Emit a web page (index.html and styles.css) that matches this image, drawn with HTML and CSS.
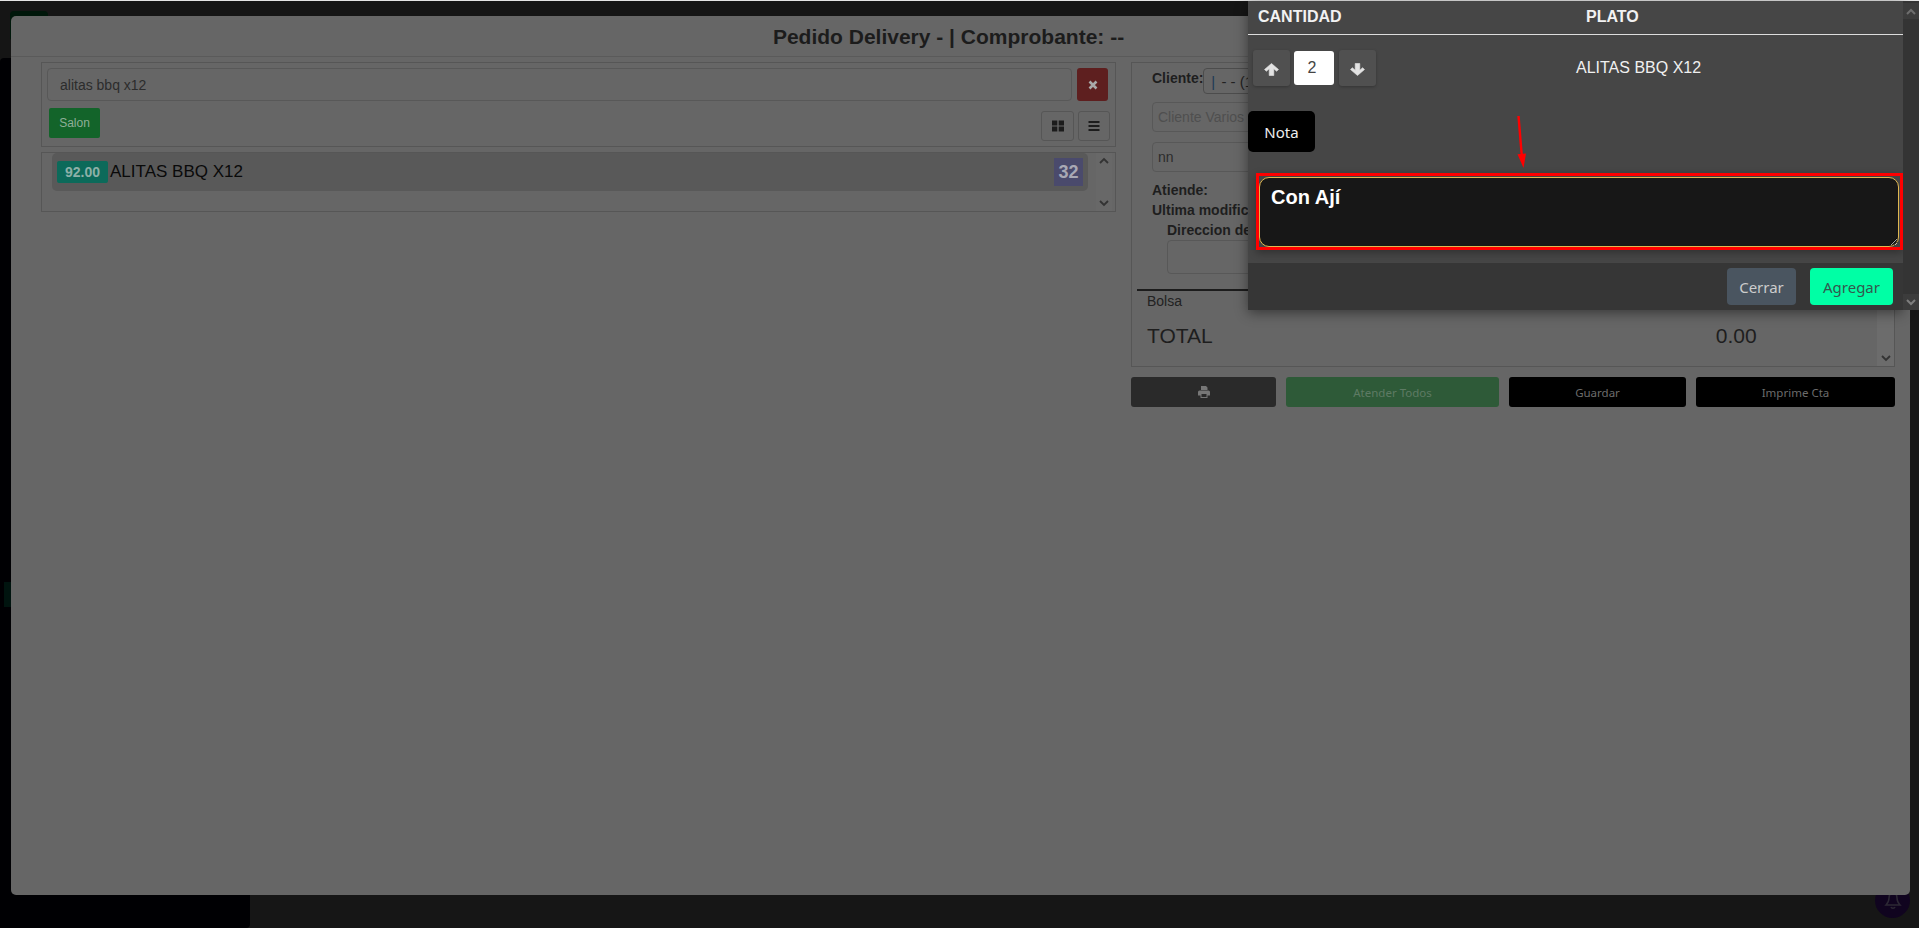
FILE: index.html
```html
<!DOCTYPE html>
<html lang="es">
<head>
<meta charset="utf-8">
<title>Pedido Delivery</title>
<link rel="stylesheet" href="styles.css">
</head>
<body>
<div class="page">
  <div class="topbar"><span class="logo"></span></div>
  <div class="below">
    <aside class="sidebar"><span class="side-active"></span></aside>
  </div>
  <span class="bell">
    <svg width="18" height="20" viewBox="0 0 18 20"><path d="M9 2c-3 0-4 2.500-4 5 0 4-1.500 5.500-3 7h14c-1.500-1.500-3-3-3-7 0-2.500-1-5-4-5zM7 16c.5 1.500 3.500 1.500 4 0" fill="none" stroke="#2c2834" stroke-width="1.500"/></svg>
  </span>
</div>

<section class="modal">
  <header class="modal-head"><h1>Pedido Delivery - | Comprobante: --</h1></header>
  <div class="modal-body">
    <div class="col-left">
      <div class="box search-box">
        <div class="search-row">
          <div class="field search-field">alitas bbq x12</div>
          <button class="btn-x">
            <svg width="10" height="10" viewBox="0 0 10 10"><path d="M1.500 1.500l7 7M8.500 1.500l-7 7" stroke="#a8a8a8" stroke-width="2.600" fill="none"/></svg>
          </button>
        </div>
        <div class="tool-row">
          <button class="btn-salon">Salon</button>
          <div class="view-btns">
            <button class="btn-view">
              <svg width="12" height="12" viewBox="0 0 12 12"><path d="M0 .5h5.300v5H0zM6.700 .5H12v5H6.700zM0 6.500h5.300v5H0zM6.700 6.500H12v5H6.700z" fill="#1c1c1c"/></svg>
            </button>
            <button class="btn-view btn-view-b">
              <svg width="12" height="12" viewBox="0 0 12 12"><path d="M.5 1h11v2H.5zM.5 5h11v2H.5zM.5 9h11v2H.5z" fill="#1c1c1c"/></svg>
            </button>
          </div>
        </div>
      </div>
      <div class="box list-box">
        <div class="list">
          <div class="item">
            <span class="price">92.00</span>
            <span class="item-name">ALITAS BBQ X12</span>
            <span class="stock">32</span>
          </div>
        </div>
        <div class="scroll scroll-left">
          <svg class="chev" width="10" height="7" viewBox="0 0 10 7"><path d="M1 6l4-4 4 4" stroke="#333" stroke-width="1.800" fill="none"/></svg>
          <svg class="chev" width="10" height="7" viewBox="0 0 10 7"><path d="M1 1l4 4 4-4" stroke="#333" stroke-width="1.800" fill="none"/></svg>
        </div>
      </div>
    </div>

    <div class="col-right">
      <div class="box client-box">
        <div class="client-main">
          <div class="client-row">
            <label class="lbl">Cliente:</label>
            <div class="field select-field"><span class="bar">|</span> - - (1</div>
          </div>
          <div class="field plain-field muted">Cliente Varios</div>
          <div class="field plain-field">nn</div>
          <p class="lbl line">Atiende:</p>
          <p class="lbl line">Ultima modificacion:</p>
          <p class="lbl line indent">Direccion de entrega:</p>
          <div class="field addr-field"></div>
          <div class="bag">
            <p class="bag-label">Bolsa</p>
            <div class="total"><span>TOTAL</span><span class="total-num">0.00</span></div>
          </div>
        </div>
        <div class="scroll scroll-right">
          <svg class="chev" width="10" height="7" viewBox="0 0 10 7"><path d="M1 6l4-4 4 4" stroke="#333" stroke-width="1.800" fill="none"/></svg>
          <svg class="chev" width="10" height="7" viewBox="0 0 10 7"><path d="M1 1l4 4 4-4" stroke="#333" stroke-width="1.800" fill="none"/></svg>
        </div>
      </div>
      <div class="actions">
        <button class="act act-print">
          <svg width="12" height="12" viewBox="0 0 12 12"><path d="M3 0h5l1.500 1.500V4H3zM1.500 4.500h9A1.500 1.500 0 0 1 12 6v3.500H9.500V12h-7V9.500H0V6a1.500 1.500 0 0 1 1.500-1.500zM3.500 8v3h5V8z" fill="#777" fill-rule="evenodd"/></svg>
        </button>
        <button class="act act-serve">Atender Todos</button>
        <button class="act act-save">Guardar</button>
        <button class="act act-print-acc">Imprime Cta</button>
      </div>
    </div>
  </div>
</section>

<section class="panel">
  <div class="panel-head"><span class="h-qty">CANTIDAD</span><span class="h-dish">PLATO</span></div>
  <div class="qty-row">
    <div class="qty">
      <button class="qty-btn">
        <svg width="15" height="13" viewBox="0 0 15 13"><path d="M7.500.5L14.500 6.500 12.600 8.300 9.800 5.800V12.500H5.200V5.800L2.400 8.300.5 6.500z" fill="#e2e2e2" stroke="#e2e2e2" stroke-width=".6" stroke-linejoin="round"/></svg>
      </button>
      <div class="qty-val">2</div>
      <button class="qty-btn">
        <svg width="15" height="13" viewBox="0 0 15 13"><path d="M7.500 12.500L.5 6.500 2.400 4.700 5.200 7.200V.5H9.800V7.200L12.600 4.700 14.500 6.500z" fill="#e2e2e2" stroke="#e2e2e2" stroke-width=".6" stroke-linejoin="round"/></svg>
      </button>
    </div>
    <div class="dish">ALITAS BBQ X12</div>
  </div>
  <div class="note-tag">Nota</div>
  <div class="note-frame">
    <textarea class="note" spellcheck="false">Con Ají</textarea>
  </div>
  <footer class="panel-foot">
    <button class="btn-close">Cerrar</button>
    <button class="btn-add">Agregar</button>
  </footer>
  <svg class="arrow" width="14" height="54" viewBox="0 0 14 54"><path d="M2.500 0L5.800 40" stroke="#f00" stroke-width="2.400" fill="none"/><path d="M1.500 38.300l8.500-.8L7.500 52z" fill="#f00"/></svg>
</section>
<div class="panel-scroll">
  <span class="sb-btn"><svg width="10" height="7" viewBox="0 0 10 7"><path d="M1 6l4-4 4 4" stroke="#6e6e6e" stroke-width="2" fill="none"/></svg></span>
  <span class="sb-btn"><svg width="10" height="7" viewBox="0 0 10 7"><path d="M1 1l4 4 4-4" stroke="#7e7e7e" stroke-width="2" fill="none"/></svg></span>
</div>
</body>
</html>
```
FILE: styles.css
```css
* { box-sizing: border-box; }
html, body { margin: 0; height: 100%; overflow: hidden; }
body { font-family: "Liberation Sans", Arial, sans-serif; background: #161616; color: #222; }
button { font: inherit; border: 0; padding: 0; cursor: pointer; }
p, h1 { margin: 0; }

.page { height: 928px; display: flex; flex-direction: column; border-top: 1px solid #e4e4e4; position: relative; }
.topbar { height: 57px; padding: 10px 0 0 10px; background: #151515; }
.logo { display: block; width: 38px; height: 30px; background: #00170a; border-radius: 4px; }
.below { flex: 1; display: flex; }
.sidebar { width: 250px; background: #000003; border-radius: 4px 0 4px 0; position: relative; }
.side-active { position: absolute; left: 4px; top: 524px; width: 8px; height: 25px; background: #00140f; }
.bell { position: absolute; left: 1875px; top: 882px; width: 35px; height: 35px; border-radius: 50%; background: #10041f; display: flex; align-items: center; justify-content: center; }

.modal { position: absolute; left: 11px; top: 16px; width: 1899px; height: 879px; background: #666; border-radius: 5px; }
.modal-head { height: 41px; border-bottom: 1px solid #5a5a5a; text-align: center; padding: 9px 24px 0 0; }
.modal-head h1 { font-size: 21px; line-height: 24px; font-weight: 700; color: #1c1c1c; }
.modal-body { display: flex; gap: 15px; padding: 5px 15px 0 30px; }
.col-left { width: 1075px; display: flex; flex-direction: column; gap: 5px; }
.col-right { width: 764px; display: flex; flex-direction: column; gap: 10px; }

.box { border: 1px solid #565656; }
.field { border: 1px solid #585858; border-radius: 4px; font-size: 14px; color: #2c2c2c; display: flex; align-items: center; }

.search-box { height: 85px; padding: 5px; }
.search-row { display: flex; gap: 5px; }
.search-field { width: 1025px; height: 33px; padding-left: 12px; }
.btn-x { width: 31px; height: 33px; background: #5e1f1f; border-radius: 3px; display: flex; align-items: center; justify-content: center; }
.tool-row { display: flex; justify-content: space-between; margin-top: 7px; padding-left: 2px; }
.btn-salon { width: 51px; height: 30px; background: #13642a; color: #8fae98; font-size: 12px; border-radius: 2px; }
.view-btns { display: flex; gap: 4px; margin-top: 3px; }
.btn-view { width: 33px; height: 30px; background: #666; border: 1px solid #565656; border-radius: 3px; display: flex; align-items: center; justify-content: center; }
.btn-view-b { width: 32px; }

.list-box { height: 60px; display: flex; padding-left: 10px; padding-right: 3px; }
.list { flex: 1; }
.item { height: 38px; width: 1036px; background: #595959; border-radius: 5px; display: flex; align-items: center; padding: 0 5px; }
.price { width: 51px; height: 22px; background: #0c6a5a; color: #8db0a8; font-size: 14px; font-weight: 700; border-radius: 2px; display: flex; align-items: center; justify-content: center; }
.item-name { margin-left: 2px; font-size: 17px; color: #0a0a0a; flex: 1; }
.stock { width: 29px; height: 28px; background: #4a4a6c; color: #a8a8b4; font-size: 18px; font-weight: 700; display: flex; align-items: center; justify-content: center; }
.scroll { display: flex; flex-direction: column; justify-content: space-between; align-items: center; }
.scroll-left { width: 16px; background: #686868; padding: 4px 0; }

.client-box { height: 305px; display: flex; overflow: hidden; }
.client-main { flex: 1; padding: 5px 0 0 5px; min-width: 0; }
.client-row { display: flex; align-items: flex-start; height: 26px; padding-left: 15px; }
.lbl { font-size: 14px; font-weight: 700; color: #1e1e1e; line-height: 20px; }
.select-field { width: 200px; height: 26px; padding-left: 7px; font-size: 15px; color: #222; border-color: #4c4c4c; white-space: pre; }
.bar { color: #1c3a55; margin-right: 2px; }
.plain-field { margin: 8px 0 0 15px; width: 600px; height: 30px; padding-left: 5px; font-size: 14px; }
.plain-field + .plain-field { margin-top: 10px; }
.muted { color: #4f4f4f; }
.line { padding-left: 15px; white-space: nowrap; }
.plain-field + .line { margin-top: 8px; }
.indent { padding-left: 30px; }
.addr-field { margin: 0 0 0 30px; width: 500px; height: 34px; }
.bag { margin-top: 15px; border-top: 2px solid #1c1c1c; padding: 0 0 0 10px; }
.bag-label { font-size: 14px; line-height: 20px; color: #222; }
.total { display: flex; font-size: 21px; margin-top: 12px; line-height: 26px; color: #1e1e1e; }
.total-num { margin-left: 503px; }
.scroll-right { width: 17px; background: #6c6c6c; padding: 6px 0 4px; }

.actions { display: flex; gap: 10px; height: 30px; }
.act { height: 30px; border-radius: 3px; font-size: 11.500px; color: #6c6c6c; font-family: "Noto Sans", sans-serif; display: flex; align-items: center; justify-content: center; }
.act-print { width: 145px; background: #2a2a2a; }
.act-serve { width: 213px; background: #2e5a38; color: #5e7a64; }
.act-save { width: 177px; background: #000; }
.act-print-acc { width: 199px; background: #000; }

.panel { position: absolute; left: 1248px; top: 1px; width: 655px; height: 309px; background: #464646; box-shadow: 0 3px 12px rgba(0,0,0,.45); display: flex; flex-direction: column; }
.panel-head { height: 34px; border-bottom: 1px solid #ddd; display: flex; color: #f2f2f2; font-size: 16px; font-weight: 700; line-height: 32px; flex: none; }
.h-qty { padding-left: 10px; width: 338px; }
.qty-row { display: flex; margin-top: 15px; height: 37px; flex: none; }
.qty { display: flex; width: 128px; margin-left: 5px; align-items: flex-start; }
.qty-btn { width: 37px; height: 36px; background: #505050; border-radius: 3px; box-shadow: 0 1px 3px rgba(0,0,0,.25); display: flex; align-items: center; justify-content: center; padding-top: 2px; }
.qty-val { width: 40px; height: 34px; margin: 1px 5px 0 4px; background: #fff; border-radius: 3px; color: #444; font-size: 16px; display: flex; align-items: center; justify-content: center; padding-right: 4px; }
.dish { flex: 1; color: #f0f0f0; font-size: 16px; line-height: 36px; padding-left: 195px; }
.note-tag { margin-top: 24px; width: 67px; height: 41px; background: #000; color: #eee; border-radius: 5px; font-family: "Noto Sans", sans-serif; font-size: 15px; display: flex; align-items: center; justify-content: center; flex: none; }
.note-frame { margin: 21px 0 0 8px; width: 647px; height: 77px; border: 3px solid #f00; padding: 1px 0 0; flex: none; box-shadow: 0 3px 8px rgba(0,0,0,.3); background: #444; }
.note { display: block; width: 640px; height: 70px; background: #171717; color: #fff; border: 1px solid #e0b850; border-radius: 10px; padding: 7px 11px; font-family: "Liberation Sans", sans-serif; font-size: 20px; font-weight: 700; line-height: 24px; outline: 0; }
.panel-foot { margin-top: 13px; height: 47px; background: #363636; display: flex; justify-content: flex-end; gap: 14px; padding: 5px 10px 0 0; flex: none; }
.btn-close, .btn-add { height: 37px; border-radius: 4px; font-family: "Noto Sans", sans-serif; font-size: 15px; }
.btn-close { width: 69px; background: #4a5560; color: #ccc; }
.btn-add { width: 83px; background: #00ffa5; color: #33584e; }
.arrow { position: absolute; left: 268px; top: 115px; }
.panel-scroll { position: absolute; left: 1903px; top: 1px; width: 16px; height: 309px; background: #343434; display: flex; flex-direction: column; justify-content: space-between; padding-top: 2px; }
.sb-btn { height: 16px; background: #3c3c3c; display: flex; align-items: center; justify-content: center; }
```
